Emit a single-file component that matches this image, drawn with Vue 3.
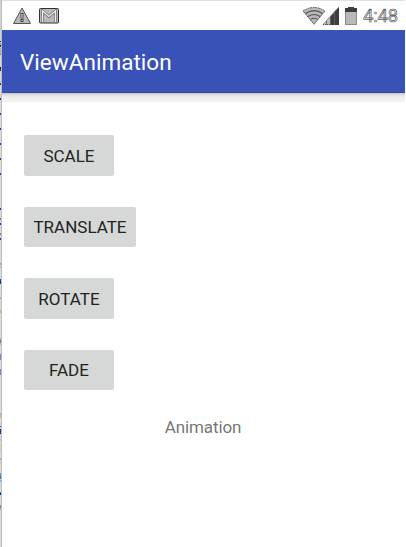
<script setup>
const buttons = ['SCALE', 'TRANSLATE', 'ROTATE', 'FADE']
// [top, height, colour] of each mark in the window edge
const marks = [
  [0, 41, '#d2d2d2'], [41, 1, '#222'], [43, 2, '#79a7b0'], [45, 2, '#333'], [48, 6, '#aaa'], [54, 1, '#777'],
  [67, 2, '#16204a'], [69, 2, '#801c1c'], [81, 1, '#aaa'], [83, 2, '#1440b4'], [98, 2, '#1440b4'],
  [113, 2, '#1440b4'], [128, 2, '#1440b4'], [143, 2, '#1440b4'], [153, 15, '#e6dcc0'], [158, 2, '#1440b4'],
  [173, 2, '#1440b4'], [208, 2, '#1440b4'], [218, 2, '#8c7c7c'], [223, 2, '#1440b4'], [233, 2, '#8c7c7c'], [238, 2, '#1440b4'],
  [263, 2, '#7ca5c8'], [266, 2, '#d6bd70'], [279, 5, '#1552c8'], [281, 2, '#0828a0'], [297, 2, '#81c0e6'],
  [310, 3, '#d9b56e'], [338, 2, '#8eb4e6'], [340, 3, '#b06c60'], [343, 2, '#a9bff0'], [354, 6, '#7c80d0'], [369, 6, '#7c80d0'],
  [413, 2, '#8eb4c8'], [415, 3, '#d6bd70'], [426, 1, '#804070'], [429, 5, '#0838c0'], [439, 2, '#a8c8dc'], [443, 6, '#ddd6b8'],
  [449, 2, '#a8d4e4'], [458, 2, '#c8a890'], [462, 2, '#a8d4e4'], [473, 2, '#b88c70'], [475, 4, '#2888c8'], [480, 2, '#70b8dc'],
  [492, 2, '#2888c8'], [493, 2, '#0020a0'], [505, 3, '#b07c70'], [508, 2, '#a0b4ec']
]
</script>

<template>
  <div class="window">
    <svg class="edge" width="2" height="547" shape-rendering="crispEdges">
      <rect width="1" height="547" fill="#dadada" />
      <rect x="1" width="1" height="547" fill="#bdbdbd" />
      <rect v-for="(m, i) in marks" :key="i" :y="m[0]" width="1" :height="m[1]" :fill="m[2]" />
    </svg>
    <main class="screen">
      <div class="status">
        <svg class="warning" width="20" height="18" viewBox="0 0 20 18">
          <path d="M10 1 18.5 16.5H1.5Z" fill="#b8b8b8" stroke="#555" />
          <path d="M8.5 6h3v5.5h-3zM8.5 12h3v3h-3z" fill="#444" />
          <path d="M10 7v4M10 13v1" stroke="#eee" />
        </svg>
        <svg class="mail" width="20" height="16" viewBox="0 0 20 16">
          <rect x=".5" y=".5" width="19" height="14.5" rx="1" fill="#bababa" stroke="#333" />
          <path d="M3.5 14V3L10 8.5 16.5 3v11" fill="none" stroke="#666" stroke-width="2.6" />
          <path d="M3.5 14V3L10 8.5 16.5 3v11" fill="none" stroke="#eee" stroke-width="1.3" />
        </svg>
        <span class="spacer"></span>
        <svg class="signals" width="56" height="20" viewBox="0 0 56 20">
          <path d="M1 5Q12-2 23 5L12 18.3Z" fill="#b9b9b9" stroke="#555" stroke-dasharray="2 .6" />
          <path d="M3.5 7.5Q12 1.8 20.5 7.5M6 10.5Q12 6.4 18 10.5M8.4 13.4Q12 11 15.6 13.4" fill="none" stroke="#555" stroke-width="1.1" />
          <path d="M21 19 37 1v18Z" fill="#bbb" />
          <path d="M28 11.1 37 1v18h-9Z" fill="#3c3c3c" />
          <path d="M21 18.5 36.5 1.5M24.5 15v4M28.5 11v8M32.5 7v12" stroke="#666" fill="none" stroke-width=".8" />
          <path d="M21 18.5h7" stroke="#555" stroke-dasharray="1 1" />
          <path d="M46 1h6v2h3v16H43V3h3Z" fill="#b9b9b9" />
          <path d="M46 1h6v1h3v4H43V2h3Z" fill="#3c3c3c" />
          <path d="M43.5 6v12.5h11V6" fill="none" stroke="#888" />
        </svg>
        <span class="clock">4:48</span>
      </div>
      <header class="toolbar">ViewAnimation</header>
      <div class="shadow"></div>
      <section class="content">
        <button v-for="label in buttons" :key="label">{{ label }}</button>
        <p>Animation</p>
      </section>
    </main>
  </div>
</template>

<style>
body { background: #fff; }
</style>

<style scoped>
.window { display: flex; width: 406px; height: 547px; overflow: hidden; font-family: Roboto, sans-serif; }
.edge { display: block; flex: none; }
.screen { width: 403px; display: flex; flex-direction: column; }
.status { box-sizing: border-box; height: 30px; flex: none; display: flex; align-items: flex-start; border-top: 1px solid #e0e0e0; padding: 0 6px 0 10px; }
.status svg { display: block; flex: none; }
.warning { margin-top: 6px; }
.mail { margin: 7px 0 0 7px; }
.spacer { flex: 1; }
.signals { margin: 5px 0 0; }
.clock { width: 36px; margin-left: 5px; font-size: 18.5px; line-height: 31px; letter-spacing: -0.2px; color: #e4e4e4; -webkit-text-stroke: 0.7px #686868; white-space: nowrap; }
.toolbar { box-sizing: border-box; height: 63px; flex: none; padding-left: 18px; background: #3952b7; color: #fff; font-size: 22.5px; line-height: 64px; letter-spacing: 0.03px; border-bottom: 1px solid #3548a3; }
.shadow { height: 9px; flex: none; background: linear-gradient(#bcbcbc 0, #d8d8d8 1px, #e8e8e8 3px, #f1f1f1 6px, #f3f3f3); }
.content { display: flex; flex-direction: column; align-items: flex-start; gap: 31px; padding: 33px 0 0 22px; }
button { box-sizing: border-box; height: 40.5px; min-width: 90px; padding: 0 9px; border: 0; border-radius: 2px; background: #d6d8d7; color: #222; font: 400 17px/40px Roboto, sans-serif; }
button:nth-child(2) { min-width: 112px; }
button:nth-child(odd) { padding-top: 1px; }
p { align-self: center; margin: -4px 0 0 -23px; font-size: 17px; line-height: 20px; letter-spacing: -0.1px; color: #777; }
</style>
